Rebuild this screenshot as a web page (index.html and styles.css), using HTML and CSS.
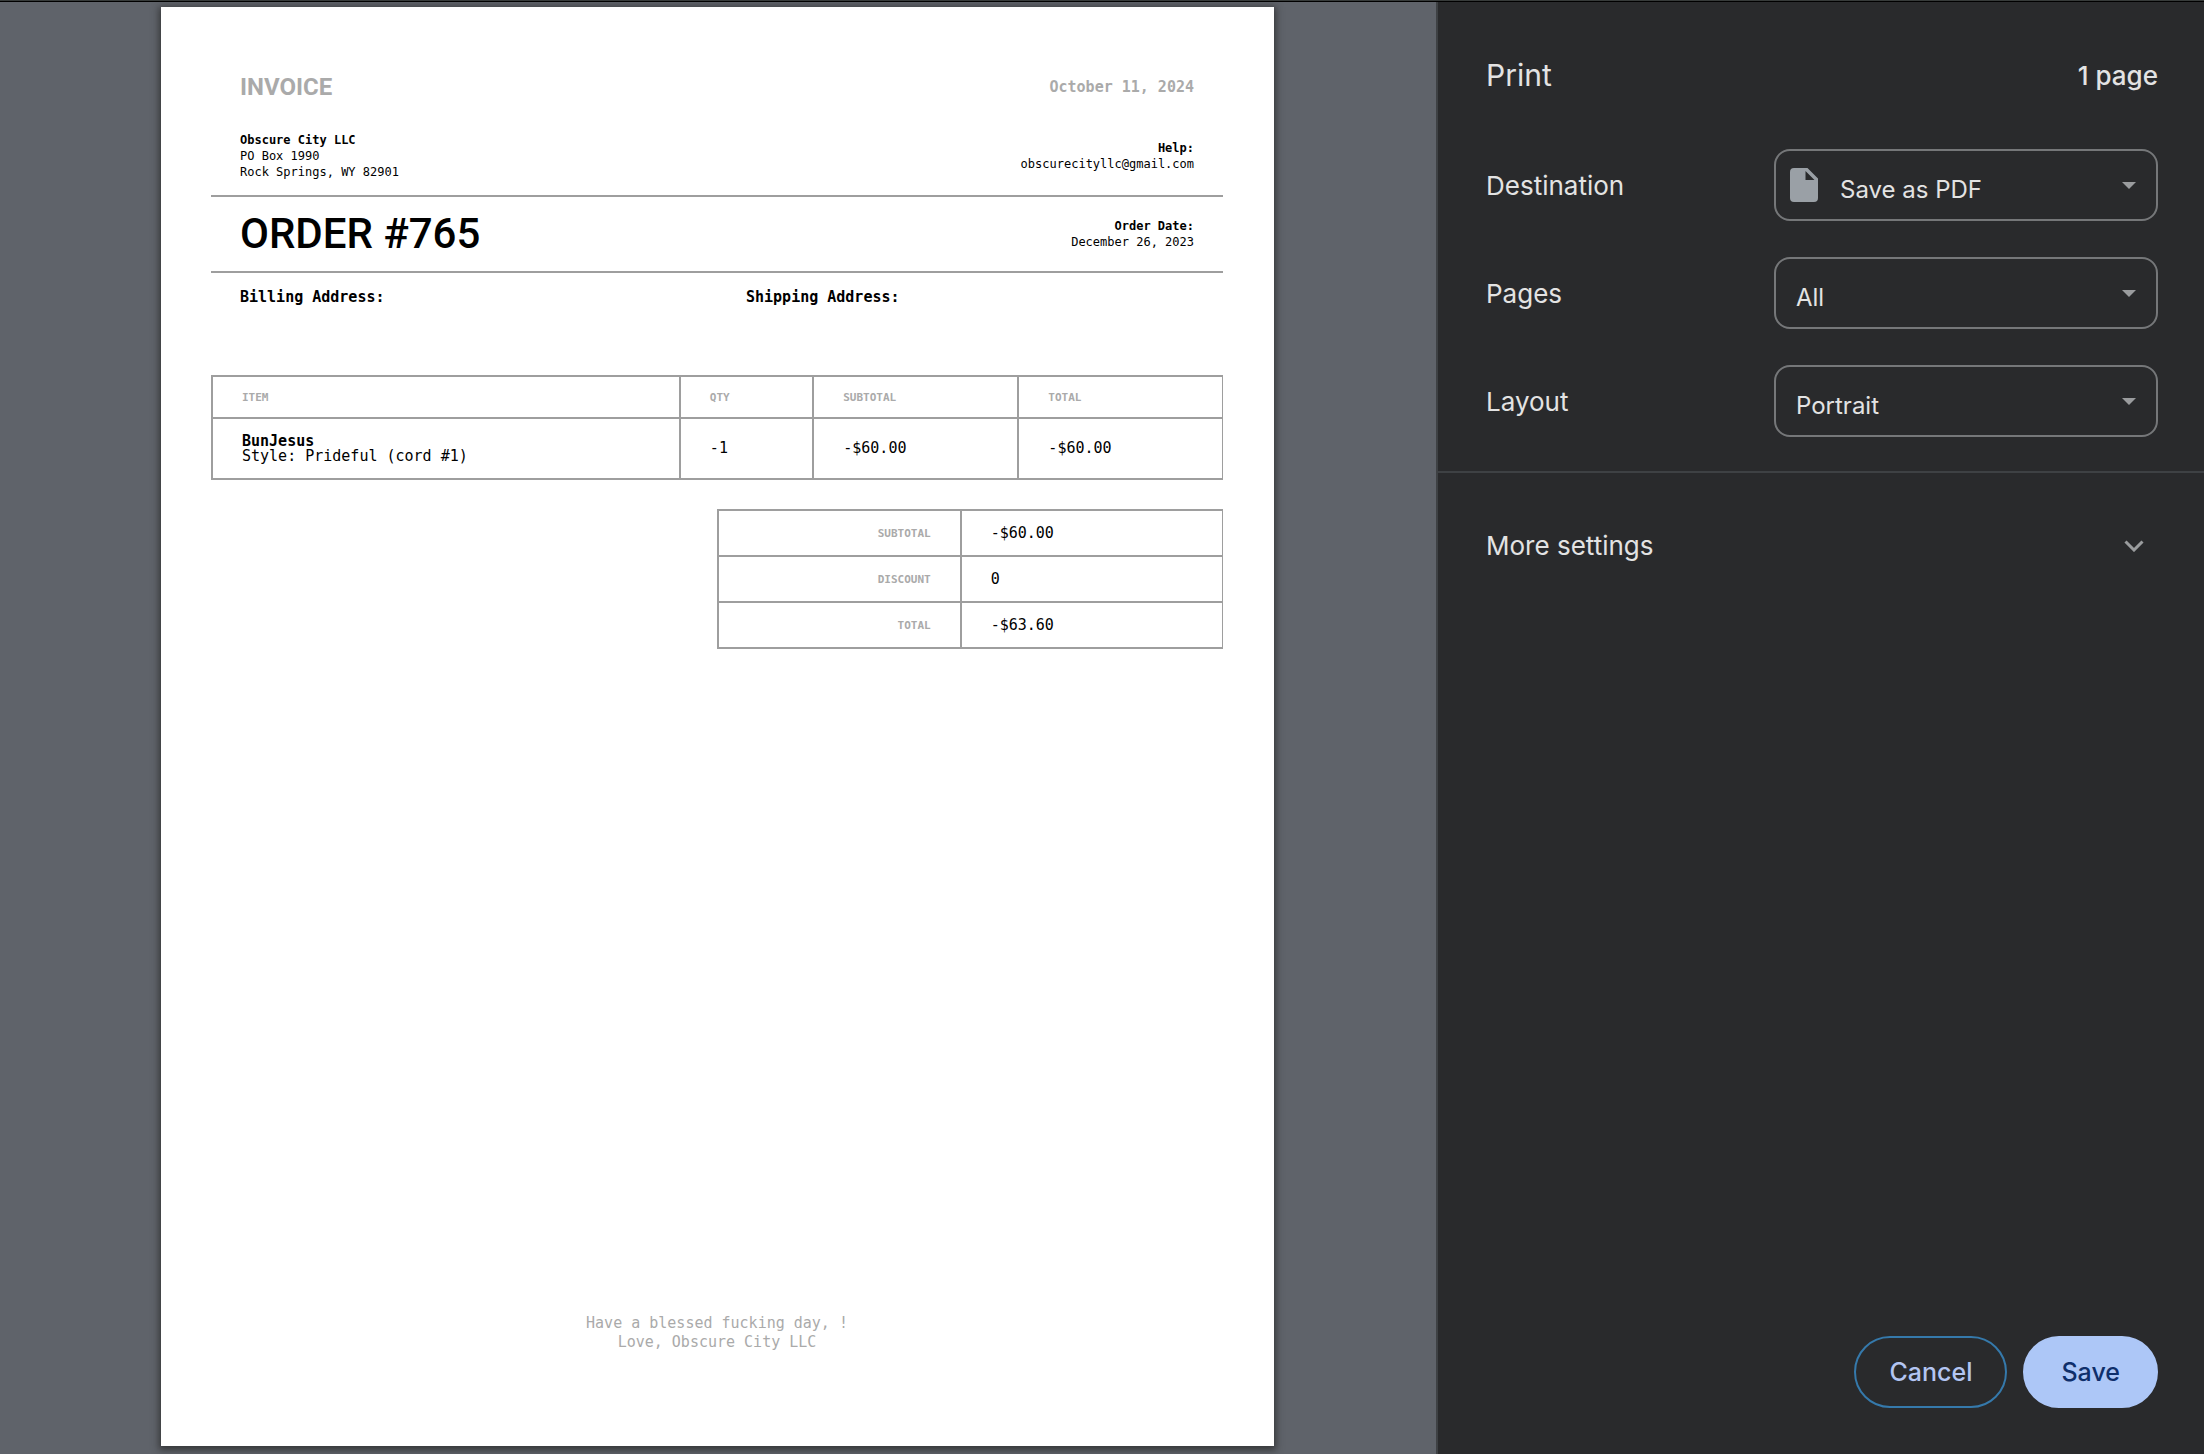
FILE: index.html
```html
<!DOCTYPE html>
<html lang="en">
<head>
<meta charset="utf-8">
<title>Print</title>
<link rel="stylesheet" href="styles.css">
</head>
<body>
<div class="dialog">
  <main class="preview">
    <article class="paper">
      <header class="row row-top">
        <h2 class="invoice-title">INVOICE</h2>
        <p class="invoice-date">October 11, 2024</p>
      </header>
      <section class="row row-company">
        <p class="small"><strong>Obscure City LLC</strong><br>PO Box 1990<br>Rock Springs, WY 82901</p>
        <p class="small right"><strong>Help:</strong><br>obscurecityllc@gmail.com</p>
      </section>
      <section class="row row-order">
        <h1 class="order-title">ORDER #765</h1>
        <p class="small right"><strong>Order Date:</strong><br>December 26, 2023</p>
      </section>
      <section class="addresses">
        <h3 class="address">Billing Address:</h3>
        <h3 class="address">Shipping Address:</h3>
      </section>
      <table class="grid items">
        <colgroup><col class="col-item"><col class="col-qty"><col class="col-subtotal"><col></colgroup>
        <thead>
          <tr><th scope="col">ITEM</th><th scope="col">QTY</th><th scope="col">SUBTOTAL</th><th scope="col">TOTAL</th></tr>
        </thead>
        <tbody>
          <tr><td><strong>BunJesus</strong><br>Style: Prideful (cord #1)</td><td>-1</td><td>-$60.00</td><td>-$60.00</td></tr>
        </tbody>
      </table>
      <table class="grid totals">
        <colgroup><col class="col-label"><col></colgroup>
        <tbody>
          <tr><th scope="row">SUBTOTAL</th><td>-$60.00</td></tr>
          <tr><th scope="row">DISCOUNT</th><td>0</td></tr>
          <tr><th scope="row">TOTAL</th><td>-$63.60</td></tr>
        </tbody>
      </table>
      <footer class="thanks">Have a blessed fucking day, !<br>Love, Obscure City LLC</footer>
    </article>
  </main>

  <aside class="sidebar">
    <header class="side-head">
      <h1 class="side-title">Print</h1>
      <span class="page-count">1 page</span>
    </header>
    <form class="settings">
      <div class="setting">
        <label for="destination">Destination</label>
        <div class="select-box">
          <select id="destination" class="with-icon"><option>Save as PDF</option></select>
          <svg class="file" viewBox="0 0 28 34" aria-hidden="true"><path fill-rule="evenodd" d="M4 0H17.500L28 10.500V30a4 4 0 0 1-4 4H4a4 4 0 0 1-4-4V4a4 4 0 0 1 4-4ZM15.500 3V12H24.500Z"/></svg>
          <svg class="arrow" viewBox="0 0 14 7" aria-hidden="true"><path d="M0 0H14L7 7Z"/></svg>
        </div>
      </div>
      <div class="setting">
        <label for="pages">Pages</label>
        <div class="select-box">
          <select id="pages"><option>All</option></select>
          <svg class="arrow" viewBox="0 0 14 7" aria-hidden="true"><path d="M0 0H14L7 7Z"/></svg>
        </div>
      </div>
      <div class="setting">
        <label for="layout">Layout</label>
        <div class="select-box">
          <select id="layout"><option>Portrait</option></select>
          <svg class="arrow" viewBox="0 0 14 7" aria-hidden="true"><path d="M0 0H14L7 7Z"/></svg>
        </div>
      </div>
    </form>
    <button type="button" class="more">
      <span>More settings</span>
      <svg class="chevron" viewBox="0 0 20 12" aria-hidden="true"><path d="M1.500 1.500L10 10L18.500 1.500"/></svg>
    </button>
    <footer class="actions">
      <button type="button" class="btn cancel">Cancel</button>
      <button type="button" class="btn save">Save</button>
    </footer>
  </aside>
</div>
</body>
</html>
```
FILE: styles.css
```css
* {
  box-sizing: border-box;
}

body,
h1,
h2,
h3,
p {
  margin: 0;
}

body {
  background: #292a2c;
  border-top: 1px solid #373b3a;
}

.dialog {
  display: flex;
  min-height: calc(100vh - 1px);
  border-top: 1px solid #000;
}

/* Preview */

.preview {
  flex: 1;
  min-width: 0;
  padding: 5px 162px 7px 161px;
  background: #5f636a;
}

.paper {
  display: flex;
  flex-direction: column;
  aspect-ratio: 1113 / 1439;
  padding: 50px 51px 94px 50px;
  background: #fff;
  box-shadow: 0 2px 7px 2px rgba(40, 40, 40, 0.75);
  color: #000;
  font: 15px/15px "DejaVu Sans Mono", "Liberation Mono", monospace;
}

.row {
  display: flex;
  align-items: center;
  justify-content: space-between;
  padding: 0 29px;
}

.row-top {
  height: 60px;
  color: #aaa;
}

.row-company {
  height: 80px;
  border-bottom: 2px solid #9e9e9e;
}

.row-order {
  height: 76px;
  border-bottom: 2px solid #9e9e9e;
}

.invoice-title {
  font: 700 24px/30px Roboto, sans-serif;
}

.order-title {
  font: 500 42px/50px Roboto, sans-serif;
}

.invoice-date {
  font-weight: 700;
}

.small {
  font-size: 12px;
  line-height: 16px;
}

.right {
  text-align: right;
}

.addresses {
  display: grid;
  grid-template-columns: 1fr 1fr;
  height: 102px;
  padding-top: 15px;
}

.address {
  padding: 0 29px;
  font-size: 15px;
  line-height: 18px;
}

.grid {
  border-collapse: collapse;
  table-layout: fixed;
}

.grid th,
.grid td {
  padding: 0 29px;
  border: 2px solid #9e9e9e;
  text-align: left;
}

.grid td:last-child,
.grid th:last-child {
  border-right-width: 1px;
}

.grid th {
  color: #aaa;
  font-size: 11px;
}

.items {
  width: 100%;
}

.items thead tr {
  height: 42px;
}

.items tbody tr {
  height: 61px;
}

.col-item {
  width: 46.3%;
}

.col-qty {
  width: 13.2%;
}

.col-subtotal {
  width: 20.3%;
}

.totals {
  width: 50%;
  margin: 29px 0 0 auto;
}

.totals tr {
  height: 46px;
}

.totals th {
  text-align: right;
}

.col-label {
  width: 48.1%;
}

.thanks {
  margin-top: auto;
  color: #aaa;
  line-height: 19px;
  text-align: center;
}

/* Settings sidebar */

.sidebar {
  display: flex;
  flex: 0 0 768px;
  flex-direction: column;
  border-left: 2px solid #3e4144;
  background: #292a2c;
  color: #e3e3e3;
  font: 26px/32px Inter, sans-serif;
}

.side-head {
  display: flex;
  align-items: center;
  justify-content: space-between;
  padding: 53px 46px 54px 48px;
}

.side-title {
  font-size: 30px;
  font-weight: 400;
  line-height: 40px;
}

.page-count {
  padding-top: 2px;
  font-weight: 500;
}

.settings {
  display: flex;
  flex-direction: column;
  gap: 36px;
  padding: 0 46px 34px 48px;
  border-bottom: 2px solid #3e4144;
}

.setting {
  display: flex;
  align-items: center;
  justify-content: space-between;
}

.setting label {
  padding-top: 2px;
}

.select-box {
  display: grid;
  align-items: center;
  width: 384px;
}

.select-box > * {
  grid-area: 1 / 1;
}

.select-box select {
  width: 100%;
  height: 72px;
  margin: 0;
  padding: 10px 48px 0 20px;
  appearance: none;
  border: 2px solid #757779;
  border-radius: 16px;
  background: transparent;
  color: inherit;
  font: 24px/32px Inter, sans-serif;
}

.select-box .with-icon {
  padding-left: 64px;
}

.file {
  width: 28px;
  height: 34px;
  margin-left: 16px;
  fill: #9aa0a6;
  pointer-events: none;
}

.arrow {
  justify-self: end;
  width: 14px;
  height: 7px;
  margin-right: 22px;
  fill: #9a9c9e;
  pointer-events: none;
}

.more {
  display: flex;
  align-items: center;
  justify-content: space-between;
  padding: 57px 60px 57px 48px;
  border: 0;
  background: none;
  color: inherit;
  font: inherit;
}

.chevron {
  width: 20px;
  height: 12px;
  fill: none;
  stroke: #9a9c9e;
  stroke-width: 3;
}

.actions {
  display: flex;
  justify-content: flex-end;
  gap: 16px;
  margin-top: auto;
  padding: 0 46px 46px;
}

.btn {
  height: 72px;
  padding: 0 33px;
  border: 2px solid #3579ab;
  border-radius: 36px;
  background: none;
  color: #b3c5f2;
  font: 500 25px/32px Inter, sans-serif;
}

.save {
  padding: 0 36px;
  border-color: #adc7f7;
  background: #adc7f7;
  color: #0f2f6b;
}
```
